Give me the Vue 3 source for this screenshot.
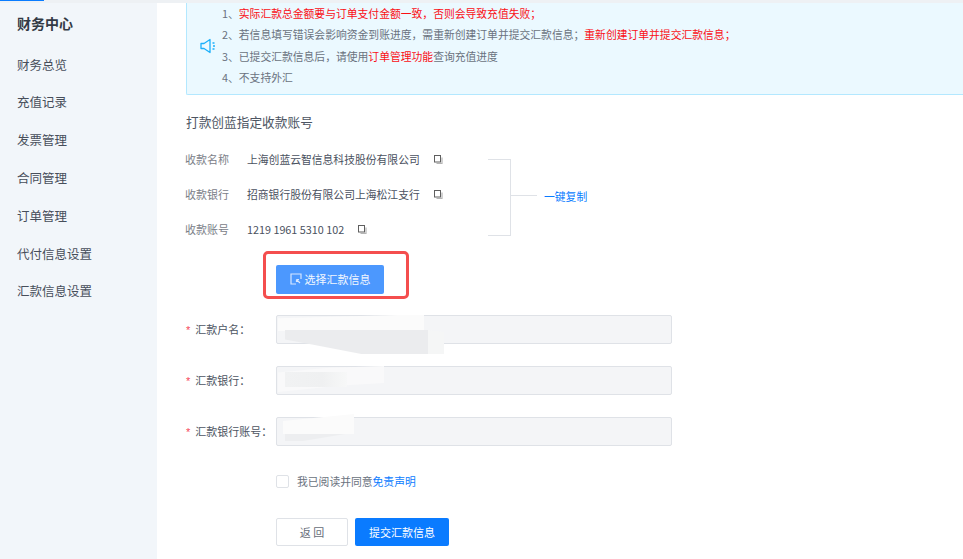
<script setup>
const menu = ['财务总览', '充值记录', '发票管理', '合同管理', '订单管理', '代付信息设置', '汇款信息设置']
const accounts = [
  { label: '收款名称', value: '上海创蓝云智信息科技股份有限公司' },
  { label: '收款银行', value: '招商银行股份有限公司上海松江支行' },
  { label: '收款账号', value: '1219 1961 5310 102' }
]
const fields = [
  { label: '汇款户名：', smudge: 'one' },
  { label: '汇款银行：', smudge: 'two' },
  { label: '汇款银行账号：', smudge: 'three' }
]
</script>

<template>
  <div class="page">
    <div class="topline"><span class="topblue"></span></div>
    <div class="body">
      <aside class="side">
        <h2 class="side-title">财务中心</h2>
        <a v-for="m in menu" :key="m" class="side-item">{{ m }}</a>
      </aside>
      <main class="main">
        <section class="notice">
          <svg class="horn" width="16" height="16" viewBox="0 0 16 16" fill="none" stroke="#1cb0fb" stroke-width="1.3">
            <path d="M1 5.5h3L10 1.5v13L4 10.5H1z" stroke-linejoin="round" />
            <path d="M12.5 5h2M13 8h2M12.5 11h2" />
          </svg>
          <ol class="notice-list">
            <li><span>1、</span><em>实际汇款总金额要与订单支付金额一致，否则会导致充值失败；</em></li>
            <li><span>2、</span>若信息填写错误会影响资金到账进度，需重新创建订单并提交汇款信息；<em>重新创建订单并提交汇款信息；</em></li>
            <li><span>3、</span>已提交汇款信息后，请使用<em>订单管理功能</em>查询充值进度</li>
            <li><span>4、</span>不支持外汇</li>
          </ol>
        </section>

        <h3 class="section-title">打款创蓝指定收款账号</h3>

        <div class="accounts">
          <div class="account-rows">
            <div v-for="a in accounts" :key="a.label" class="account-row">
              <span class="account-label">{{ a.label }}</span>
              <span class="account-value">{{ a.value }}</span>
              <svg class="copy" width="9" height="9" viewBox="0 0 9 9" fill="none">
                <path d="M8 2.5v6H2.5" stroke="#b5b5b5" stroke-width="1.2" />
                <rect x="0.5" y="0.5" width="6" height="6.5" fill="#fff" stroke="#5f5f5f" />
              </svg>
            </div>
          </div>
          <div class="bracket"></div>
          <div class="bracket-stem"></div>
          <a class="copy-all">一键复制</a>
        </div>

        <div class="pick-frame">
          <button class="pick-btn" type="button">
            <svg width="12" height="12" viewBox="0 0 12 12" fill="none" stroke="#d6e6ff" stroke-width="1.2">
              <path d="M11 6V1H1v10h5" />
              <path d="M6.5 6.5l3.5 3.5M6.5 6.5v2.5M6.5 6.5H9" />
            </svg>
            选择汇款信息
          </button>
        </div>

        <form class="form">
          <div v-for="f in fields" :key="f.label" class="field">
            <label class="field-label"><i>*</i>{{ f.label }}</label>
            <div class="input">
              <span class="smudge-light" :class="f.smudge"></span>
              <span class="smudge" :class="f.smudge"></span>
            </div>
          </div>
        </form>

        <div class="agree">
          <span class="checkbox"></span>
          <span>我已阅读并同意<a class="link">免责声明</a></span>
        </div>

        <div class="actions">
          <button class="btn-back" type="button">返 回</button>
          <button class="btn-submit" type="button">提交汇款信息</button>
        </div>
      </main>
    </div>
  </div>
</template>

<style>
html, body { margin: 0; background: #fff; overflow: hidden; }
</style>

<style scoped>
.page {
  width: 963px;
  height: 559px;
  overflow: hidden;
  font-family: "Noto Sans CJK SC", "Liberation Sans", sans-serif;
  font-size: 11px;
  color: #5c6370;
  background: #fff;
}
.topline { height: 3px; background: #eef1f4; }
.topblue { display: block; width: 44px; height: 1px; background: #0a7cff; }
.body { display: flex; height: 556px; }
.side { width: 157px; flex: none; background: #f2f6fa; padding: 10px 0 0 17px; box-sizing: border-box; }
.side-title { margin: 0 0 12.7px; font-size: 14px; line-height: 20px; font-weight: 700; color: #333a45; }
.side-item { display: block; font-size: 12.5px; line-height: 20px; height: 37.8px; padding-top: 9px; box-sizing: border-box; color: #474e5a; }
.main { flex: 1; padding-left: 29px; min-width: 0; }
.notice {
  display: flex;
  align-items: flex-start;
  height: 92px;
  box-sizing: border-box;
  border: solid #b3e8ff;
  border-width: 0 0 1px 1px;
  background: #ebf9ff;
  padding-left: 13px;
  border-radius: 0 0 0 2px;
}
.horn { flex: none; margin-top: 35px; }
.notice-list { list-style: none; margin: 0 0 0 6px; padding: 0; line-height: 21.4px; color: #6a7280; font-size: 10.8px; white-space: nowrap; }
.notice-list em { font-style: normal; color: #fa0f16; }
.section-title { margin: 18px 0 0; font-size: 12.7px; line-height: 18px; font-weight: 400; color: #4d5562; }
.accounts { display: flex; align-items: flex-start; margin: 19px 0 0 -1px; width: 420px; height: 88px; }
.account-rows { width: 303px; flex: none; display: flex; flex-direction: column; gap: 17px; }
.account-row { display: flex; align-items: center; height: 18px; }
.account-label { width: 62px; flex: none; color: #7b8088; font-size: 11px; }
.account-value { color: #4a5160; font-size: 10.8px; }
.copy { margin-left: 14px; flex: none; }
.bracket { width: 23px; height: 77px; flex: none; margin-top: 9px; box-sizing: border-box; border: 1px solid #dfe2e7; border-left: 0; }
.bracket-stem { width: 26px; height: 1px; flex: none; margin-top: 45px; background: #dfe2e7; }
.copy-all { margin: 37px 0 0 7px; line-height: 18px; color: #0a7cff; font-size: 10.8px; white-space: nowrap; }
.pick-frame {
  margin: 13px 0 0 77px;
  width: 146px;
  height: 48px;
  box-sizing: border-box;
  border: 3px solid #f44e4e;
  border-radius: 5px;
  padding: 11px 0 0 10px;
}
.pick-btn {
  display: flex;
  align-items: center;
  justify-content: center;
  gap: 3px;
  width: 108px;
  height: 29px;
  border: 0;
  padding: 0 0 2px;
  box-sizing: border-box;
  border-radius: 2px;
  background: #4c98fe;
  color: #f2f7ff;
  font: inherit;
}
.form { margin: 16px 0 0 0; display: flex; flex-direction: column; gap: 22px; }
.field { display: flex; align-items: center; height: 29px; }
.field-label { width: 90px; flex: none; color: #4d5562; font-size: 11px; white-space: nowrap; padding-bottom: 2px; }
.field-label i { font-style: normal; color: #f6465a; margin-right: 5px; font-family: "Liberation Sans", sans-serif; }
.input {
  position: relative;
  width: 396px;
  height: 29px;
  box-sizing: border-box;
  background: #f4f5f7;
  border: 1px solid #dfe2e7;
  border-radius: 2px;
}
.smudge, .smudge-light { position: absolute; display: block; }
.smudge-light.one {
  left: 1px; top: -1px; width: 146px; height: 16px;
  background: #fbfbfb;
  clip-path: polygon(0 20%, 82% 0, 100% 0, 100% 100%, 0 100%);
}
.smudge.one {
  left: 8px; top: 14px; width: 159px; height: 24px;
  background: linear-gradient(to right, #ebecee 90%, #f5f6f6 90%);
  clip-path: polygon(0 0, 90% 0, 100% 8%, 100% 100%, 48% 100%, 17% 60%, 0 40%);
}
.smudge-light.two {
  left: 1px; top: -1px; width: 106px; height: 26px;
  background: #f9f9fa;
  clip-path: polygon(0 25%, 45% 8%, 100% 0, 100% 65%, 60% 75%, 0 100%);
}
.smudge.two {
  left: 8px; top: 5px; width: 62px; height: 15px;
  background: linear-gradient(to right, #f1f2f3, #eff0f1 60%, #f7f8f8);
  clip-path: polygon(0 0, 100% 0, 100% 100%, 0 100%);
}
.smudge-light.three {
  left: 6px; top: -4px; width: 71px; height: 20px;
  background: #fbfbfb;
  clip-path: polygon(0 35%, 100% 0, 100% 100%, 0 100%);
}
.smudge.three {
  left: 8px; top: 16px; width: 60px; height: 7px;
  background: #edeef0;
  clip-path: polygon(0 0, 100% 0, 30% 100%, 0 100%);
}
.agree { display: flex; align-items: center; margin-top: 27px; height: 16px; color: #6a7280; font-size: 10.8px; }
.checkbox { width: 13px; height: 13px; box-sizing: border-box; border: 1px solid #dfe2e7; border-radius: 2px; margin: 0 8px 0 90px; background: #fff; }
.link { color: #0a7cff; }
.actions { display: flex; gap: 7px; margin: 29px 0 0 90px; }
.btn-back, .btn-submit { height: 28px; padding: 0; border-radius: 2px; font: inherit; box-sizing: border-box; }
.btn-back { width: 72px; background: #fff; border: 1px solid #dfe2e7; color: #666d78; }
.btn-submit { width: 94px; background: #0a7bff; border: 0; color: #fff; }
</style>
